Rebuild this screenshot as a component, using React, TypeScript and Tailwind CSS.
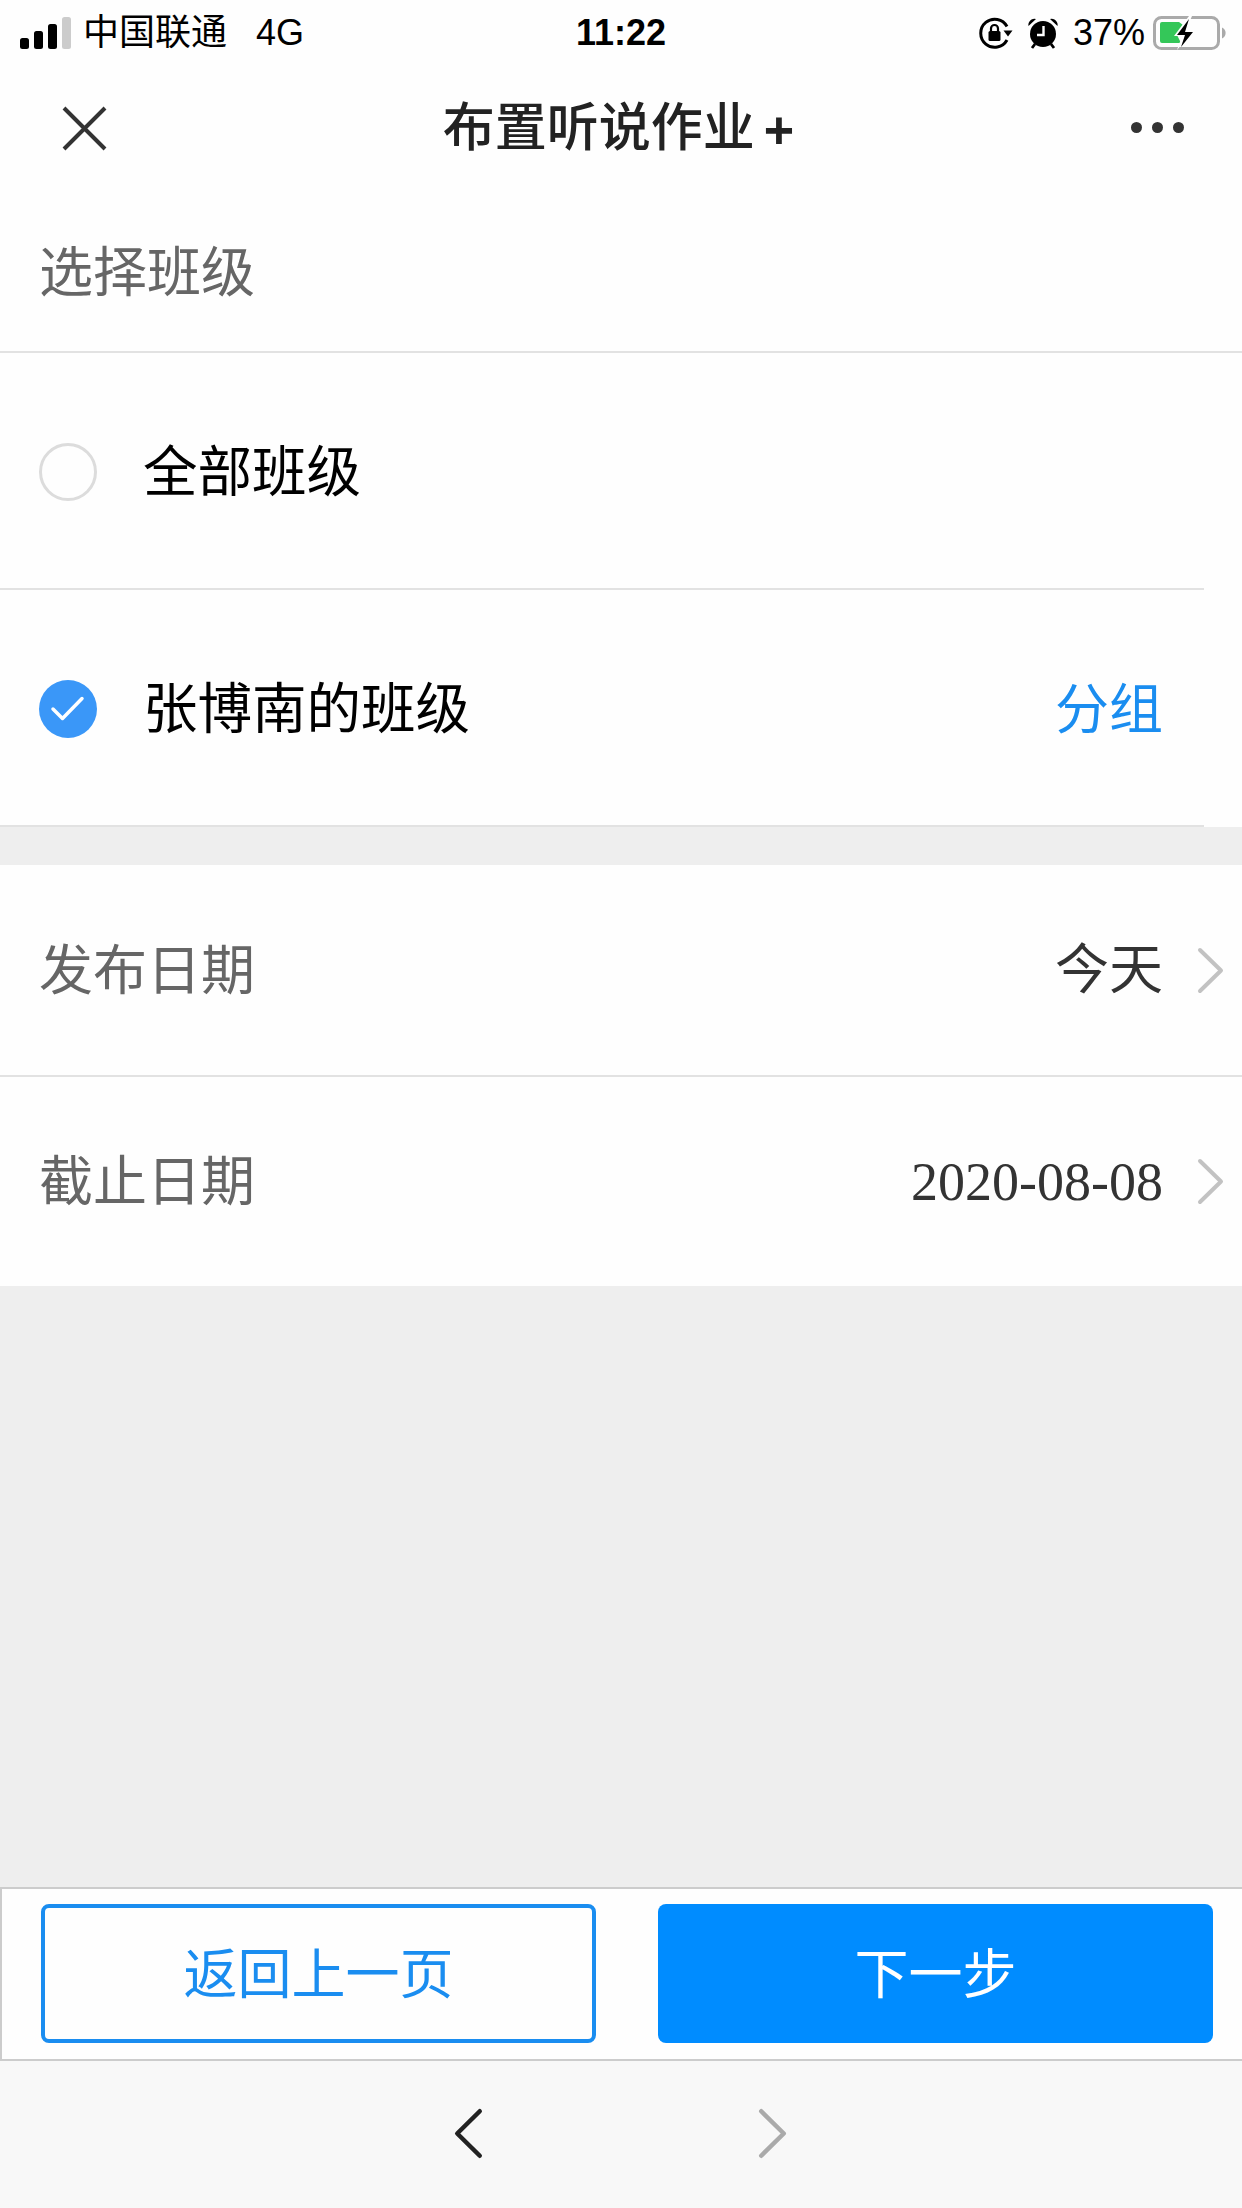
const font = "font-['Liberation_Sans','Noto_Sans_CJK_SC',sans-serif]";

function Signal() {
    return (
        <svg width="51" height="32" viewBox="0 0 51 32">
            <rect x="0" y="21" width="9" height="11" rx="2.5" fill="#000" />
            <rect x="14" y="14" width="9" height="18" rx="2.5" fill="#000" />
            <rect x="28" y="7" width="9" height="25" rx="2.5" fill="#000" />
            <rect x="42" y="0" width="9" height="32" rx="2.5" fill="#ccc" />
        </svg>
    );
}

function RotationLock() {
    return (
        <svg width="34" height="32" viewBox="0 0 34 32" fill="none">
            <path d="M28 9.500A14 14 0 1 0 28 23" stroke="#000" strokeWidth="3" />
            <path d="M24.500 13.500h9l-4.500 6z" fill="#000" />
            <rect x="9.500" y="14" width="12" height="10" rx="1.500" fill="#000" />
            <path d="M12 14v-2.500a3.500 3.500 0 0 1 7 0V14" stroke="#000" strokeWidth="2.200" />
        </svg>
    );
}

function Alarm() {
    return (
        <svg width="30" height="32" viewBox="0 0 30 32" fill="none">
            <circle cx="15" cy="17" r="13" fill="#000" />
            <path d="M0.500 9a6 6 0 0 1 7.500-7zM29.500 9a6 6 0 0 0-7.500-7z" fill="#000" />
            <path d="M7 27l-3 4M23 27l3 4" stroke="#000" strokeWidth="2.800" />
            <path d="M15.500 9v9H9" stroke="#fff" strokeWidth="2.400" />
        </svg>
    );
}

function Battery() {
    return (
        <svg width="74" height="34" viewBox="0 0 74 34" fill="none">
            <rect x="1.500" y="1.500" width="64" height="31" rx="7" stroke="#aaa" strokeWidth="3" />
            <path d="M69 11.500a6 6 0 0 1 0 11z" fill="#aaa" />
            <path d="M9 6h17l4 3-6 10 4 8H9a2 2 0 0 1-2-2V8a2 2 0 0 1 2-2z" fill="#34c759" />
            <path d="M36 0L21 20h8l-5 14 17-20h-8l6-14z" fill="#fff" />
            <path d="M36 3L24 19h8l-4 12 12-15h-8l4-13z" fill="#000" />
        </svg>
    );
}

function Chevron({ dir, color, width, height, stroke }: { dir: "left" | "right"; color: string; width: number; height: number; stroke: number }) {
    const m = stroke / 2 + 1;
    const d = dir === "right"
        ? `M${m} ${m}L${width - m} ${height / 2}L${m} ${height - m}`
        : `M${width - m} ${m}L${m} ${height / 2}L${width - m} ${height - m}`;
    return (
        <svg width={width} height={height} viewBox={`0 0 ${width} ${height}`} fill="none">
            <path d={d} stroke={color} strokeWidth={stroke} strokeLinecap="round" strokeLinejoin="round" />
        </svg>
    );
}

function ClassRow({ label, checked, action }: { label: string; checked?: boolean; action?: string }) {
    return (
        <div className="pr-[38px] bg-[#fefefe]">
            <div className="flex h-[237px] items-center border-b-2 border-[#e2e2e2] pl-[39px] pr-[41px] pt-[3px]">
                {checked ? (
                    <svg width="58" height="58" viewBox="0 0 58 58" fill="none">
                        <circle cx="29" cy="29" r="29" fill="#3a97f8" />
                        <path d="M14 29l9.500 9.500L43 18.500" stroke="#fff" strokeWidth="3.500" strokeLinecap="round" strokeLinejoin="round" />
                    </svg>
                ) : (
                    <div className="h-[58px] w-[58px] rounded-full border-[3px] border-[#dcdcdc]" />
                )}
                <span className="ml-[46px] pt-[2px] text-[54.5px] leading-none text-black">{label}</span>
                {action && <span className="ml-auto pt-[2px] text-[54px] leading-none text-[#1a8df0]">{action}</span>}
            </div>
        </div>
    );
}

function DateRow({ label, value, serif, divider }: { label: string; value: string; serif?: boolean; divider?: boolean }) {
    return (
        <div className={`flex items-center bg-[#fefefe] pl-[39px] pr-[18px] ${divider ? "h-[212px] border-b-2 border-[#e2e2e2]" : "h-[209px]"}`}>
            <span className="pt-[1px] text-[54px] leading-none text-[#666]">{label}</span>
            <span className={`ml-auto text-[54px] leading-none text-[#333] ${serif ? "font-['Liberation_Serif',serif]" : ""}`}>{value}</span>
            <span className="ml-[34px] flex">
                <Chevron dir="right" color="#c2c2c2" width={27} height={47} stroke={4} />
            </span>
        </div>
    );
}

export default function App() {
    return (
        <div className={`flex h-[2208px] w-[1242px] flex-col overflow-hidden bg-[#eeeeee] ${font}`}>
            <div className="bg-[#fefefe]">
                {/* status bar */}
                <div className="grid h-[62px] grid-cols-[1fr_auto_1fr] items-center pt-[3px] text-[36px] leading-none text-black">
                    <div className="flex items-center pl-[20px]">
                        <Signal />
                        <span className="ml-[12px]">中国联通</span>
                        <span className="ml-[29px]">4G</span>
                    </div>
                    <div className="font-bold">11:22</div>
                    <div className="flex items-center justify-end pr-[15px]">
                        <RotationLock />
                        <span className="ml-[15px] flex"><Alarm /></span>
                        <span className="ml-[15px]">37%</span>
                        <span className="ml-[8px] flex"><Battery /></span>
                    </div>
                </div>

                {/* title bar */}
                <div className="flex h-[132px] items-center justify-between">
                    <div className="flex w-[168px] justify-center">
                        <svg width="45" height="45" viewBox="0 0 45 45" fill="none">
                            <path d="M2 2l41 41M43 2L2 43" stroke="#333" strokeWidth="4" />
                        </svg>
                    </div>
                    <div className="flex items-center pr-[5px] text-[52px] font-medium leading-none text-[#222]">
                        <span>布置听说作业</span>
                        <span className="ml-[9px] pt-[3px] font-bold">+</span>
                    </div>
                    <div className="flex w-[168px] justify-center gap-[10px] pb-[2px]">
                        <span className="h-[11px] w-[11px] rounded-full bg-[#333]" />
                        <span className="h-[11px] w-[11px] rounded-full bg-[#333]" />
                        <span className="h-[11px] w-[11px] rounded-full bg-[#333]" />
                    </div>
                </div>

                <div className="flex h-[159px] items-center border-b-2 border-[#e2e2e2] pl-[39px] text-[54px] leading-none text-[#666]">
                    选择班级
                </div>
            </div>

            <ClassRow label="全部班级" />
            <ClassRow label="张博南的班级" checked action="分组" />

            <div className="mt-[38px]">
                <DateRow label="发布日期" value="今天" divider />
                <DateRow label="截止日期" value="2020-08-08" serif />
            </div>

            <div className="flex-1" />

            {/* footer buttons */}
            <div className="flex h-[174px] items-center justify-between border-y-2 border-l-2 border-[#cccccc] bg-[#fefefe] pb-[1px] pl-[39px] pr-[29px]">
                <button className="h-[139px] w-[555px] rounded-[8px] border-4 border-[#1a8df0] pt-[3px] text-[54px] leading-none text-[#1a8df0]">
                    返回上一页
                </button>
                <button className="h-[139px] w-[555px] rounded-[8px] bg-[#008cff] pt-[3px] text-[54px] leading-none text-white">
                    下一步
                </button>
            </div>

            {/* browser toolbar */}
            <div className="flex h-[147px] items-center justify-center gap-[275px] bg-[#f8f8f8] pb-[3px] pr-[1px]">
                <Chevron dir="left" color="#222" width={29} height={51} stroke={4.500} />
                <Chevron dir="right" color="#aaa" width={29} height={51} stroke={4.500} />
            </div>
        </div>
    );
}
